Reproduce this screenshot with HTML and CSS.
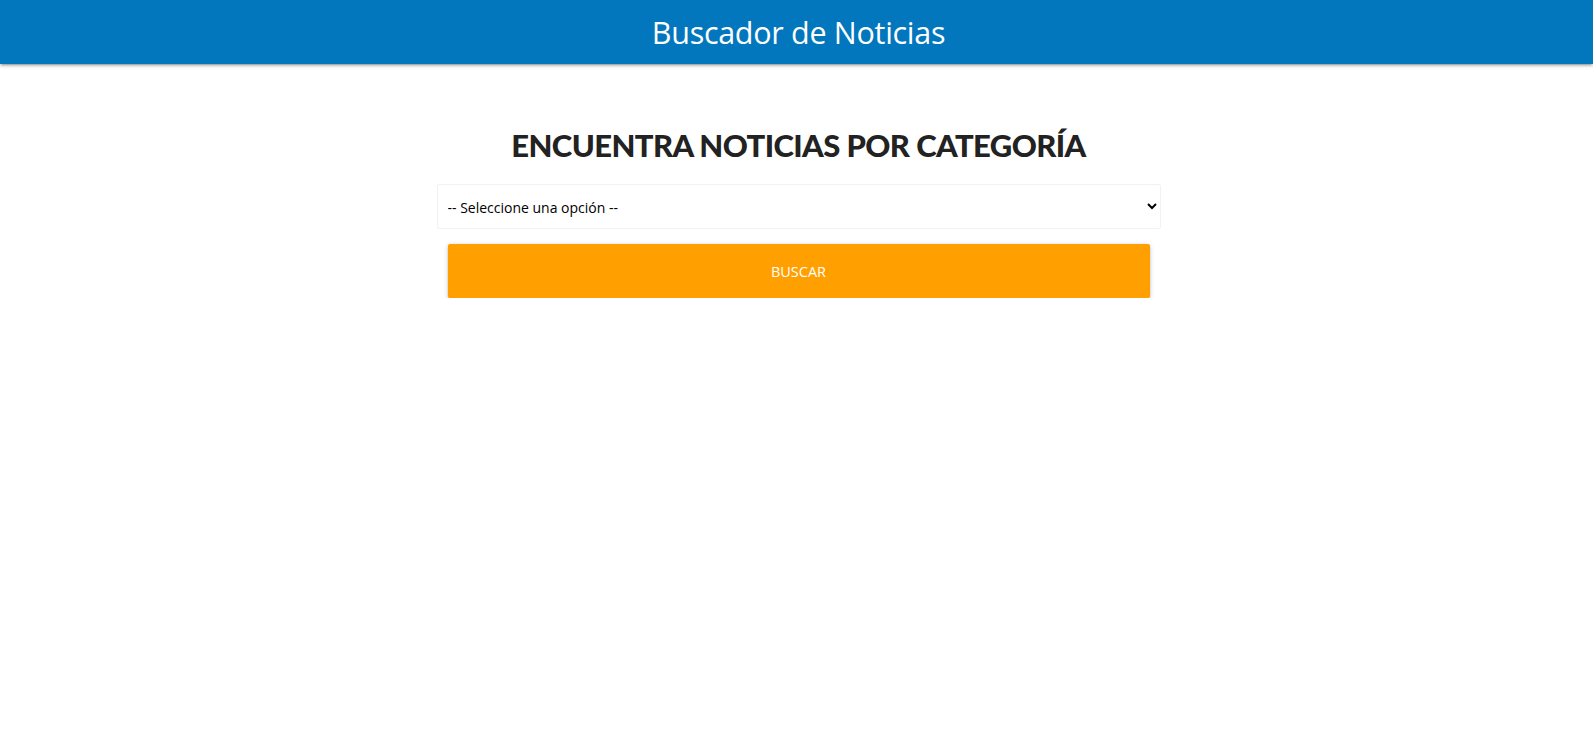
FILE: index.html
```html
<!DOCTYPE html>
<html lang="es">
<head>
<meta charset="utf-8">
<title>Buscador de Noticias</title>
<link rel="stylesheet" href="styles.css">
</head>
<body>
<header class="topbar">
  <span class="brand">Buscador de Noticias</span>
</header>
<main class="content">
  <h2 class="heading">ENCUENTRA NOTICIAS POR CATEGORÍA</h2>
  <form class="search-form">
    <select class="category">
      <option>-- Seleccione una opción --</option>
      <option>General</option>
      <option>Negocios</option>
      <option>Entretenimiento</option>
      <option>Salud</option>
      <option>Ciencia</option>
      <option>Deportes</option>
      <option>Tecnología</option>
    </select>
    <div class="btn-wrap">
      <button type="button" class="btn">BUSCAR</button>
    </div>
  </form>
</main>
</body>
</html>
```
FILE: styles.css
```css
* { box-sizing: border-box; }
html, body { margin: 0; padding: 0; background: #fff; }
body { font-family: "Open Sans", "Noto Sans", sans-serif; color: rgba(0,0,0,0.87); }

.topbar {
  height: 64px;
  background: #0277bd;
  display: flex;
  align-items: center;
  justify-content: center;
  box-shadow: 0 2px 2px 0 rgba(0,0,0,0.14), 0 3px 1px -2px rgba(0,0,0,0.12), 0 1px 5px 0 rgba(0,0,0,0.2);
}
.brand {
  color: #fff;
  font-size: 30.5px;
  line-height: 1;
  font-weight: 400;
  letter-spacing: -0.3px;
  padding-left: 4px;
}

.content {
  width: 728px;
  margin: 0 auto;
  padding: 61px 0 0 4px;
}
.heading {
  margin: 0 0 19px;
  text-align: center;
  font-family: "Lato", sans-serif;
  font-weight: 900;
  font-size: 31px;
  line-height: 40px;
  color: #222;
  letter-spacing: -0.6px;
}
.search-form { display: flex; flex-direction: column; }
.category {
  height: 45px;
  width: 100%;
  padding: 1px 7px 0 6px;
  border: 1px solid #f2f2f2;
  border-radius: 2px;
  background: #fff;
  font-family: "Open Sans", sans-serif;
  font-size: 14px;
  color: #000;
  outline: none;
}
.btn-wrap { padding: 15px 11px 0; }
.btn {
  width: 100%;
  height: 54px;
  border: none;
  border-radius: 2px;
  background: #ffa000;
  color: #fff;
  font-family: "Open Sans", sans-serif;
  font-size: 14.5px;
  letter-spacing: 0;
  box-shadow: 0 2px 2px 0 rgba(0,0,0,0.14), 0 3px 1px -2px rgba(0,0,0,0.12), 0 1px 5px 0 rgba(0,0,0,0.2);
  cursor: pointer;
}
```
